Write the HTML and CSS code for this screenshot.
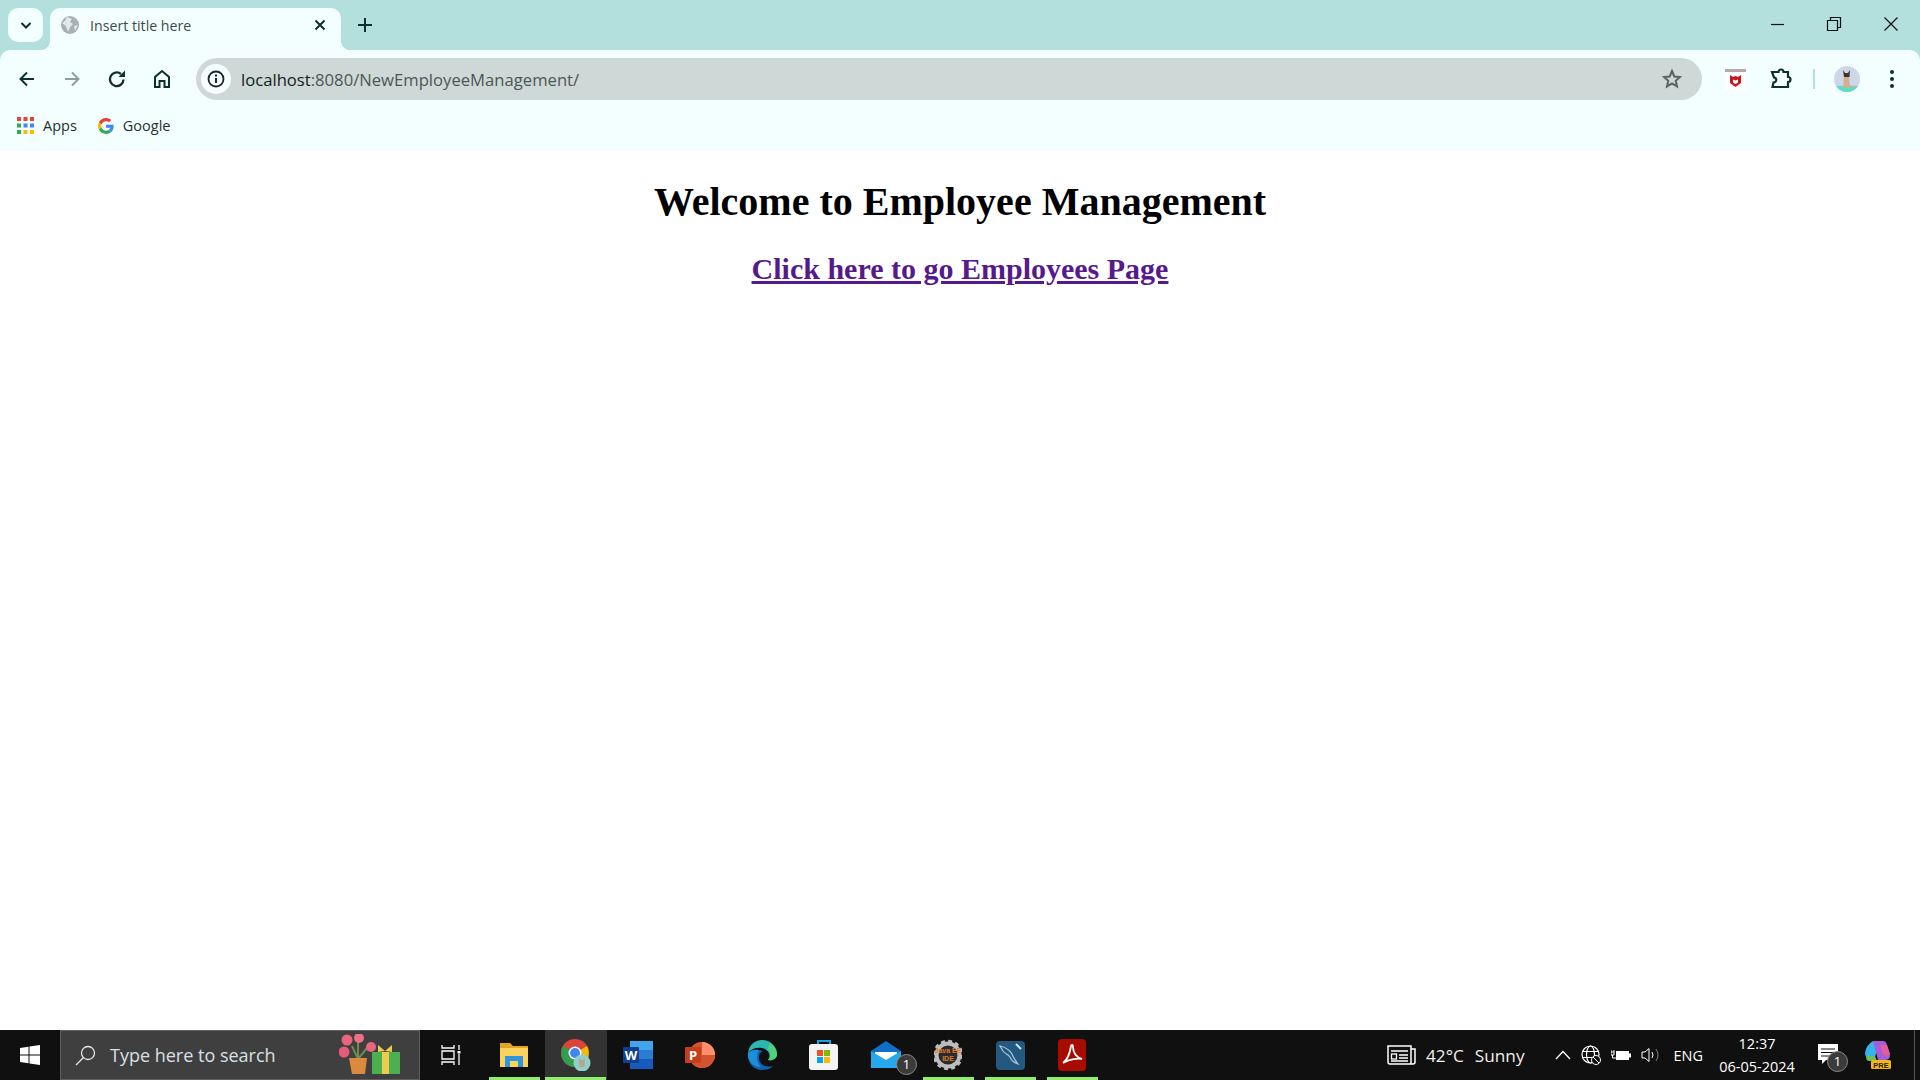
FILE: index.html
```html
<!DOCTYPE html>
<html lang="en">
<head>
  <meta charset="UTF-8">
  <link rel="stylesheet" href="styles.css">
  <title>Insert title here</title>
</head>
<body>
  <!-- browser frame: tabs -->
  <div class="tabstrip">
    <div class="tab-list">
      <svg width="14" height="14" viewBox="0 0 14 14"><path d="M2.5 5 7 9.5 11.5 5" fill="none" stroke="#0f2f2e" stroke-width="2"/></svg>
    </div>
    <div class="tab">
      <svg class="favicon" width="20" height="20" viewBox="0 0 20 20"><circle cx="10" cy="10" r="9" fill="#a9b0b3"/><path d="M7 2 12 4 10 7 13 9 10 12 8 17 6 11 2 8 5 6Z" fill="#f2fffe" opacity=".75"/><path d="M14 11 18 10 15 16Z" fill="#f2fffe" opacity=".75"/></svg>
      <span class="tab-title">Insert title here</span>
      <svg width="14" height="14" viewBox="0 0 14 14"><path d="M2.5 2.5 11.5 11.5M11.5 2.5 2.5 11.5" stroke="#0f2f2e" stroke-width="2"/></svg>
    </div>
    <svg class="new-tab" width="16" height="16" viewBox="0 0 16 16"><path d="M8 1V15M1 8H15" stroke="#0f2f2e" stroke-width="2"/></svg>
    <div class="window-btns">
      <svg width="16" height="16" viewBox="0 0 16 16"><path d="M2 8.5H15" stroke="#111" stroke-width="1.2"/></svg>
      <svg width="16" height="16" viewBox="0 0 16 16"><path d="M1.5 4.5H11.5V14.5H1.5ZM4.5 4.5V1.5H14.5V11.5H11.5" fill="none" stroke="#111" stroke-width="1.2"/></svg>
      <svg width="16" height="16" viewBox="0 0 16 16"><path d="M1.5 1.5 14.5 14.5M14.5 1.5 1.5 14.5" stroke="#111" stroke-width="1.2"/></svg>
    </div>
  </div>

  <!-- toolbar + bookmarks -->
  <div class="chrome">
    <div class="toolbar">
      <div class="nav-btns">
        <svg width="20" height="20" viewBox="0 0 20 20"><path d="M17 10H4M10 3.500 3.500 10 10 16.500" fill="none" stroke="#0f2f2e" stroke-width="2"/></svg>
        <svg width="20" height="20" viewBox="0 0 20 20"><path d="M3 10H16M10 3.500 16.500 10 10 16.500" fill="none" stroke="#8aa09f" stroke-width="2"/></svg>
        <svg width="20" height="20" viewBox="0 0 20 20"><path d="M16.500 10.500A6.800 6.800 0 1 1 14 5" fill="none" stroke="#0f2f2e" stroke-width="2.300"/><path d="M11.500 8H18V1.500Z" fill="#0f2f2e"/></svg>
        <svg width="20" height="20" viewBox="0 0 20 20"><path d="M3 18V8L10 2 17 8V18H12.500V12H7.500V18Z" fill="none" stroke="#0f2f2e" stroke-width="2"/></svg>
      </div>
      <div class="omnibox">
        <span class="site-info">
          <svg width="18" height="18" viewBox="0 0 18 18"><circle cx="9" cy="9" r="7.500" fill="none" stroke="#1c2525" stroke-width="1.800"/><path d="M9 8V13M9 4.500V6.500" stroke="#1c2525" stroke-width="2"/></svg>
        </span>
        <span class="url"><span class="url-host">localhost</span>:8080/NewEmployeeManagement/</span>
        <svg class="star" width="20" height="20" viewBox="0 0 20 20"><path d="M10 2 12.300 7.500 18 8 13.700 11.800 15 17.500 10 14.500 5 17.500 6.300 11.800 2 8 7.700 7.500Z" fill="none" stroke="#5a6160" stroke-width="2"/></svg>
      </div>
      <div class="ext-btns">
        <svg class="mcafee" width="21" height="21" viewBox="0 0 21 21"><rect width="21" height="21" fill="#fff"/><rect width="21" height="3" fill="#b5aaa8"/><path d="M5 6 8 8 10.500 7 13 8 16 6V14L10.500 18 5 14Z" fill="#c8161d"/><path d="M8 10.500 10.500 11.500 13 10.500V13.500L10.500 15 8 13.500Z" fill="#fff"/></svg>
        <svg class="puzzle" width="22" height="22" viewBox="0 0 22 22"><path d="M2 4H8.500A2.500 2.500 0 0 1 13.500 4H18V9A2.500 2.500 0 0 1 18 14V19H2.500L3.500 14.500A2.500 2.500 0 0 0 4 9.500Z" fill="none" stroke="#0f2f2e" stroke-width="2.200"/></svg>
        <span class="ext-sep"></span>
        <svg class="avatar" width="26" height="26" viewBox="0 0 26 26"><circle cx="13" cy="13" r="13" fill="#cfd6ea"/><path d="M2 20Q13 19 24 20 20 26 13 26 6 26 2 20Z" fill="#5fdcc8"/><path d="M10 11H15L16 20H21V21.500H9Z" fill="#d3b08a"/><path d="M9 4 11 7H14L16 4 15.500 11H10Z" fill="#3b3330"/></svg>
        <svg class="kebab" width="6" height="20" viewBox="0 0 6 20"><circle cx="3" cy="3" r="2" fill="#0f2f2e"/><circle cx="3" cy="10" r="2" fill="#0f2f2e"/><circle cx="3" cy="17" r="2" fill="#0f2f2e"/></svg>
      </div>
    </div>
    <div class="bookmarks">
      <div class="bookmark">
        <svg width="17" height="17" viewBox="0 0 17 17"><g fill="#ea4335"><rect width="4" height="4"/><rect x="6.500" width="4" height="4"/><rect x="13" width="4" height="4"/></g><rect y="6.500" width="4" height="4" fill="#34a853"/><rect x="6.500" y="6.500" width="4" height="4" fill="#4285f4"/><rect x="13" y="6.500" width="4" height="4" fill="#4285f4"/><rect y="13" width="4" height="4" fill="#34a853"/><rect x="6.500" y="13" width="4" height="4" fill="#fbbc05"/><rect x="13" y="13" width="4" height="4" fill="#fbbc05"/></svg>
        <span>Apps</span>
      </div>
      <div class="bookmark">
        <svg width="16" height="16" viewBox="0 0 48 48"><path fill="#ea4335" d="M24 9.500c3.500 0 6.700 1.300 9.100 3.500l6.800-6.800C35.800 2.400 30.300 0 24 0 14.600 0 6.500 5.400 2.600 13.200l7.900 6.200C12.400 13.700 17.700 9.500 24 9.500z"/><path fill="#4285f4" d="M47 24.500c0-1.600-.1-3.100-.4-4.500H24v9h12.900c-.6 3-2.300 5.500-4.800 7.200l7.700 6C44.300 37.900 47 31.800 47 24.500z"/><path fill="#fbbc05" d="M10.500 28.600a14.500 14.500 0 0 1 0-9.200l-7.900-6.200a24 24 0 0 0 0 21.600z"/><path fill="#34a853" d="M24 48c6.500 0 11.900-2.100 15.800-5.800l-7.700-6c-2.100 1.400-4.900 2.300-8.100 2.300-6.300 0-11.600-4.200-13.500-9.900l-7.900 6.200C6.500 42.600 14.600 48 24 48z"/></svg>
        <span>Google</span>
      </div>
    </div>
  </div>

  <!-- the page itself -->
  <main class="page">
    <h1>Welcome to Employee Management</h1>
    <h2><a href="#">Click here to go Employees Page</a></h2>
  </main>

  <!-- windows taskbar -->
  <footer class="taskbar">
    <div class="start">
      <svg width="20" height="20" viewBox="0 0 20 20"><path fill="#fff" d="M0 3 8.500 1.700V9.500H0ZM9.500 1.500 20 0V9.500H9.500ZM0 10.500H8.500V18.300L0 17ZM9.500 10.500H20V20L9.500 18.500Z"/></svg>
    </div>
    <div class="search">
      <svg width="21" height="21" viewBox="0 0 21 21"><circle cx="13" cy="8" r="6.500" fill="none" stroke="#e6e6e6" stroke-width="1.300"/><path d="M8.500 12.500 1 20" stroke="#e6e6e6" stroke-width="1.300"/></svg>
      <span class="search-text">Type here to search</span>
      <svg class="search-art" width="64" height="42" viewBox="0 0 64 42">
        <path d="M19 25 13 12M19 25V8M19 25 28 14" stroke="#6f8a4e" stroke-width="2" fill="none"/>
        <circle cx="8" cy="6" r="5.500" fill="#e8657f"/><circle cx="20" cy="4" r="5" fill="#ec6f85"/><circle cx="5" cy="18" r="5.500" fill="#e35d79"/><circle cx="32" cy="13" r="5" fill="#e8657f"/>
        <path d="M10 24H28L26 40H13Z" fill="#d98a3c"/>
        <rect x="33" y="18" width="28" height="22" fill="#4caf50"/><rect x="43" y="18" width="7" height="22" fill="#eccb4e"/><path d="M46 17 39 11V18ZM46 17 53 11V18Z" fill="#eccb4e"/>
      </svg>
    </div>
    <div class="task-view">
      <svg width="20" height="20" viewBox="0 0 20 20"><path d="M1 0V3H13V0M1 20V17H13V20M1 6H13V14H1ZM18 0V5M18 9V20" fill="none" stroke="#fff" stroke-width="1.300"/><rect x="16.500" y="6" width="3" height="2.500" fill="#fff"/></svg>
    </div>

    <div class="apps">
      <div class="app running">
        <svg width="28" height="28" viewBox="0 0 28 28"><path d="M0 2H10L13 5H28V26H0Z" fill="#e0a526"/><rect y="7" width="28" height="19" rx="1" fill="#fbd35c"/><path d="M5 26V15H23V26H18V20H10V26Z" fill="#2f95dd"/></svg>
      </div>
      <div class="app running active">
        <svg width="30" height="32" viewBox="0 0 30 32"><circle cx="14" cy="14" r="14" fill="#db4437"/><path d="M14 14 26 7A14 14 0 0 1 14 28Z" fill="#f2b90f"/><path d="M14 14 14 28A14 14 0 0 1 2 7Z" fill="#2f9e4f"/><circle cx="14" cy="14" r="6.500" fill="#fff"/><circle cx="14" cy="14" r="5" fill="#4285f4"/><circle cx="21" cy="24" r="8.500" fill="#8fd0ca"/><path d="M18 19 20 21H22L24 19 23.500 28H18.500Z" fill="#b9a48f"/></svg>
      </div>
      <div class="app">
        <svg width="30" height="30" viewBox="0 0 30 30"><path d="M7 1H30V10H7Z" fill="#41a5ee"/><path d="M7 10H30V19H7Z" fill="#2b7cd3"/><path d="M7 19H30V29H7Z" fill="#185abd"/><rect y="7" width="16" height="16" rx="1" fill="#103f91"/><text x="8" y="20" class="app-letter" text-anchor="middle">W</text></svg>
      </div>
      <div class="app">
        <svg width="30" height="30" viewBox="0 0 30 30"><circle cx="17" cy="15" r="13" fill="#ed6c47"/><path d="M17 2A13 13 0 0 1 30 15H17Z" fill="#ff8f6b"/><path d="M4 15A13 13 0 0 0 30 15H17V2A13 13 0 0 0 4 15Z" fill="#d35230"/><rect y="7" width="16" height="16" rx="1" fill="#c43e1c"/><text x="8" y="20" class="app-letter" text-anchor="middle">P</text></svg>
      </div>
      <div class="app">
        <svg width="30" height="30" viewBox="0 0 30 30"><path d="M1 13C0 22 6 30 15 30 19 30 23 29 26 26 19 28 13 25 12 19 11.500 15 13 12 16 11 10 9 4 10 1 13Z" fill="#0f62ae"/><path d="M1 13C2 5 8 0 15 0 24 0 30 7 30 14 30 19 25 21 21 20 24 17 23 10 15 8 9 7 4 9 1 13Z" fill="#2bb8b0"/><path d="M23 3C27 6 30 10 30 14 30 19 25 21 21 20 24 17 24 12 21 9Z" fill="#52d17c"/><path d="M1 13C4 10 8 9 12 10 9 15 9 22 14 27 6 27 0 21 1 13Z" fill="#1c8fdc"/></svg>
      </div>
      <div class="app">
        <svg width="30" height="32" viewBox="0 0 30 32"><path d="M9 7V2H21V7" fill="none" stroke="#1aa3df" stroke-width="2"/><rect y="5" width="29" height="26" rx="3" fill="#f4f4f4"/><rect x="8" y="11" width="6" height="6" fill="#f25022"/><rect x="15" y="11" width="6" height="6" fill="#7fba00"/><rect x="8" y="18" width="6" height="6" fill="#00a4ef"/><rect x="15" y="18" width="6" height="6" fill="#ffb900"/></svg>
      </div>
      <div class="app">
        <svg width="30" height="30" viewBox="0 0 30 30"><path d="M0 11 15 1 30 11V28H0Z" fill="#0f6fc6"/><path d="M4 12H26V20L15 26 4 20Z" fill="#fff"/><path d="M0 11 15 20 30 11V28H0Z" fill="#27a8ea"/></svg>
        <span class="count-badge app-badge">1</span>
      </div>
      <div class="app running">
        <svg width="28" height="32" viewBox="0 0 28 32"><circle cx="14" cy="16" r="11.500" fill="#2a2a33" stroke="#bdbdbd" stroke-width="4"/><circle cx="14" cy="16" r="14" fill="none" stroke="#bdbdbd" stroke-width="2.500" stroke-dasharray="4 3.300"/><text x="14" y="14" class="java-text" text-anchor="middle">Java EE</text><text x="14" y="22" class="java-text" text-anchor="middle">IDE</text></svg>
      </div>
      <div class="app running">
        <svg width="29" height="29" viewBox="0 0 29 29"><rect width="29" height="29" rx="4" fill="#23587f"/><path d="M4 5C9 6 13 8 16 13 17 16 19 19 22 23 17 21 15 19 14 16 12 13 9 13 7 10Z" fill="none" stroke="#a8c7dc" stroke-width="1.200"/><path d="M20 3 25 8" stroke="#cfe0ea" stroke-width="2"/></svg>
      </div>
      <div class="app running">
        <svg width="28" height="32" viewBox="0 0 28 32"><rect width="28" height="32" rx="4" fill="#a80c00"/><path d="M5 24C9 21 12 14 13 7 14 5 15 6 15 8 15 14 19 19 24 20 21 19 11 20 5 24Z" fill="none" stroke="#fff" stroke-width="1.800"/></svg>
      </div>
    </div>

    <div class="tray">
      <svg class="news" width="29" height="20" viewBox="0 0 29 20"><path d="M1 1H24V19H3Q1 19 1 17ZM24 4H28V17Q28 19 26 19H24" fill="none" stroke="#fff" stroke-width="1.500"/><path d="M4 6H21M12 10H21M12 13H21M4 16H21" stroke="#fff" stroke-width="1.300"/><rect x="4.500" y="9" width="5" height="5" fill="none" stroke="#fff" stroke-width="1.300"/></svg>
      <span class="weather">42°C</span>
      <span class="weather sunny">Sunny</span>
      <div class="tray-icons">
        <svg width="16" height="10" viewBox="0 0 16 10"><path d="M1 9 8 1.500 15 9" fill="none" stroke="#fff" stroke-width="1.300"/></svg>
        <svg width="20" height="20" viewBox="0 0 20 20"><g fill="none" stroke="#fff" stroke-width="1.200"><circle cx="9.500" cy="9.500" r="8.500"/><ellipse cx="9.500" cy="9.500" rx="4" ry="8.500"/><path d="M1.500 6.500H17.500M1.500 12.500H17.500"/></g><circle cx="15" cy="15" r="4.500" fill="#101010" stroke="#fff"/><path d="M12 12 18 18" stroke="#fff"/></svg>
        <svg width="20" height="12" viewBox="0 0 20 12"><path d="M0 1V3M3 1V3M0 3H3V6H0ZM1.500 6V9H5" fill="none" stroke="#fff"/><rect x="5" y="2" width="13" height="9" fill="#fff"/><rect x="18" y="4.500" width="2" height="4" fill="#fff"/></svg>
        <svg width="20" height="16" viewBox="0 0 20 16"><path d="M1 5H4L8 1.500V14.500L4 11H1Z" fill="none" stroke="#fff"/><path d="M11 5Q13 8 11 11" fill="none" stroke="#fff"/><path d="M15 2Q19 8 15 14" fill="none" stroke="#777"/></svg>
      </div>
      <span class="lang">ENG</span>
      <div class="clock">
        <span>12:37</span>
        <span>06-05-2024</span>
      </div>
      <div class="notif">
        <svg width="22" height="22" viewBox="0 0 22 22"><path d="M0 0H20V16H8L4 20V16H0Z" fill="#fff"/><path d="M3 5H17M3 8.500H17M3 12H12" stroke="#101010" stroke-width="1.200"/></svg>
        <span class="count-badge">1</span>
      </div>
      <svg class="copilot" width="26" height="28" viewBox="0 0 26 28"><path d="M8 0H15L10 16H3Q0 16 0 12 1 4 8 0Z" fill="#36b5e8"/><path d="M8 0H18Q21 0 22 4L25 14Q25 19 20 19H13Z" fill="#a55cd8"/><path d="M1 15 10 15 12 20H4Q1 20 1 15Z" fill="#69c15e"/><path d="M15 4 22 4 25 13Q23 16 18 14Z" fill="#e35d9c"/><rect x="6" y="19" width="20" height="9" rx="1.500" fill="#f3b61f"/><text x="16" y="26.500" class="pre-text" text-anchor="middle">PRE</text></svg>
      <span class="show-desktop"></span>
    </div>
  </footer>
</body>
</html>
```

FILE: styles.css
```css
* {
  box-sizing: border-box;
}

html,
body {
  height: 100%;
}

body {
  margin: 0;
  display: flex;
  flex-direction: column;
  overflow: hidden;
  background-color: #b3dfdd; /* frame colour shows behind rounded toolbar */
  font-family: "Open Sans", "Noto Sans", sans-serif;
}

svg {
  display: block;
  flex-shrink: 0;
}

/* ---- tab strip ---- */
.tabstrip {
  height: 50px;
  display: flex;
  align-items: flex-start;
  padding-left: 8px;
}

.tab-list {
  width: 35px;
  height: 34px;
  margin-top: 8px;
  background-color: #f2fffe;
  border-radius: 10px;
  display: flex;
  align-items: center;
  justify-content: center;
}

.tab {
  position: relative;
  width: 291px;
  height: 42px;
  margin-top: 8px;
  margin-left: 7px;
  padding: 0 14px 8px 10px;
  background-color: #f2fffe;
  border-radius: 10px 10px 0 0;
  display: flex;
  align-items: center;
}

/* little flares at the tab's feet */
.tab::before,
.tab::after {
  content: "";
  position: absolute;
  bottom: 0;
  width: 10px;
  height: 10px;
}

.tab::before {
  left: -10px;
  background: radial-gradient(circle at 0 0, transparent 10px, #f2fffe 10.5px);
}

.tab::after {
  right: -10px;
  background: radial-gradient(circle at 100% 0, transparent 10px, #f2fffe 10.5px);
}

.tab-title {
  flex: 1;
  margin-left: 10px;
  font-size: 14.200px;
  color: #3c4a49;
}

.new-tab {
  margin: 17px 0 0 16px;
}

.window-btns {
  margin-left: auto;
  margin-top: 16px;
  display: flex;
  gap: 41px;
  padding-right: 21px;
}

/* ---- toolbar ---- */
.chrome {
  height: 101px;
  background-color: #f2fffe;
  border-radius: 10px 10px 0 0;
}

.toolbar {
  height: 58px;
  display: flex;
  align-items: center;
}

.nav-btns {
  width: 196px;
  padding-left: 17px;
  display: flex;
  gap: 25px;
}

.omnibox {
  width: 1506px;
  height: 42px;
  background-color: #cdd8d7;
  border-radius: 21px;
  display: flex;
  align-items: center;
  padding: 0 20px 0 5px;
}

.site-info {
  width: 30px;
  height: 30px;
  border-radius: 50%;
  background-color: #f2fffe;
  display: flex;
  align-items: center;
  justify-content: center;
}

.url {
  flex: 1;
  margin-left: 10px;
  font-size: 16.650px;
  color: #4c5655;
}

.url-host {
  color: #141c1c;
}

.ext-btns {
  flex: 1;
  display: flex;
  align-items: center;
  padding-left: 23px;
}

.puzzle {
  margin-left: 24px;
}

.ext-sep {
  width: 2px;
  height: 20px;
  margin-left: 21px;
  background-color: #b3dfdd;
}

.avatar {
  margin-left: 19px;
}

.kebab {
  margin-left: 29px;
}

/* ---- bookmarks bar ---- */
.bookmarks {
  height: 35px;
  display: flex;
  align-items: center;
  gap: 21px;
  padding-left: 17px;
}

.bookmark {
  display: flex;
  align-items: center;
  gap: 9px;
  font-size: 14.500px;
  color: #22302f;
}

/* ---- page content ---- */
.page {
  flex: 1;
  background-color: #fff;
  text-align: center;
  color: #000;
  font-family: "Liberation Serif", serif;
}

.page h1 {
  margin: 27px 0 0;
  font-size: 40px;
}

.page h2 {
  margin: 27px 0 0;
  font-size: 30px;
}

.page a {
  color: #551a8b;
}

/* ---- taskbar ---- */
.taskbar {
  height: 50px;
  background-color: #101010;
  display: flex;
  align-items: stretch;
  color: #fff;
}

.start {
  width: 60px;
  display: flex;
  align-items: center;
  justify-content: center;
}

.search {
  width: 360px;
  background-color: #3f3f3f;
  border: 1px solid #5e5e5e;
  display: flex;
  align-items: center;
  padding-left: 14px;
}

.search-text {
  margin-left: 14px;
  font-size: 18px;
  color: #d8e0e6;
}

.search-art {
  margin-left: auto;
  margin-right: 16px;
}

.task-view {
  width: 62px;
  display: flex;
  align-items: center;
  justify-content: center;
}

.apps {
  display: flex;
  margin-left: 1px;
}

.app {
  position: relative;
  width: 62px;
  display: flex;
  align-items: center;
  justify-content: center;
}

/* green line under running programs */
.app.running::after {
  content: "";
  position: absolute;
  left: 6px;
  right: 5px;
  bottom: 0;
  height: 3px;
  background-color: #8ef06a;
}

.app.active {
  background-color: #333;
}

.app.active::after {
  left: 0;
  right: 1px;
}

.app-letter {
  font-family: "Open Sans", sans-serif;
  font-size: 13px;
  font-weight: 700;
  fill: #fff;
}

.java-text {
  font-family: "Liberation Sans", sans-serif;
  font-size: 7px;
  font-weight: 700;
  fill: #e07b1a;
}

.pre-text {
  font-family: "Liberation Sans", sans-serif;
  font-size: 7.500px;
  font-weight: 700;
  fill: #2b2100;
}

.count-badge {
  position: absolute;
  width: 21px;
  height: 21px;
  border-radius: 50%;
  background-color: #3b3b3b;
  border: 1px solid #8a8a8a;
  font-size: 13px;
  line-height: 19px;
  text-align: center;
  color: #fff;
}

.app-badge {
  left: 41px;
  top: 24px;
}

.tray {
  flex: 1;
  display: flex;
  align-items: center;
  padding-left: 284px;
}

.weather {
  margin-left: 10px;
  font-size: 17.200px;
  color: #eee;
}

.sunny {
  margin-left: 11px;
}

.tray-icons {
  margin-left: 30px;
  display: flex;
  align-items: center;
  gap: 10px;
}

.lang {
  margin-left: 13px;
  font-size: 14.500px;
}

.clock {
  width: 108px;
  display: flex;
  flex-direction: column;
  align-items: center;
  gap: 3px;
  font-size: 14.500px;
  line-height: 20px;
}

.notif {
  position: relative;
  margin-left: 7px;
  width: 22px;
}

.notif .count-badge {
  left: 9px;
  top: 7px;
}

.copilot {
  margin-left: 25px;
}

.show-desktop {
  width: 1px;
  height: 100%;
  margin-left: auto;
  margin-right: 5px;
  background-color: #555;
}
```
